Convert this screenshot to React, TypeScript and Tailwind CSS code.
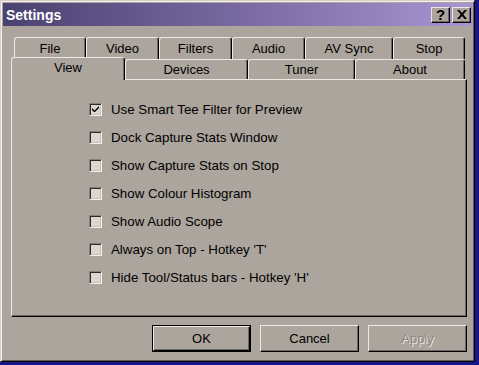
import React from 'react';

const row1: [string, number][] = [
  ['File', 72],
  ['Video', 73],
  ['Filters', 73],
  ['Audio', 73],
  ['AV Sync', 88],
  ['Stop', 72],
];

const row2: [string, number][] = [
  ['Devices', 123],
  ['Tuner', 107],
  ['About', 110],
];

const options = [
  { label: 'Use Smart Tee Filter for Preview', checked: true },
  { label: 'Dock Capture Stats Window', checked: false },
  { label: 'Show Capture Stats on Stop', checked: false },
  { label: 'Show Colour Histogram', checked: false },
  { label: 'Show Audio Scope', checked: false },
  { label: "Always on Top - Hotkey 'T'", checked: false },
  { label: "Hide Tool/Status bars - Hotkey 'H'", checked: false },
];

function Tab({ label, width }: { label: string; width: number }) {
  return (
    <div
      style={{ width }}
      className="h-full flex items-center justify-center bg-[#aca59d] border-t border-l border-r border-t-[#ece7e1] border-l-[#ece7e1] border-r-[#000] rounded-t-[3px] shadow-[inset_-1px_0_#6e6862]"
    >
      {label}
    </div>
  );
}

function Checkbox({ checked }: { checked: boolean }) {
  return (
    <div className="w-[13px] h-[13px] border border-t-[#857e77] border-l-[#857e77] border-r-[#f2eee9] border-b-[#f2eee9] bg-[#dcd6cf] shadow-[inset_1px_1px_#2e2a27,inset_-1px_-1px_#c9c2bb] flex items-center justify-center">
      {checked && (
        <svg width="7" height="7" viewBox="0 0 7 7" className="block">
          <path d="M0 2 L0 4 L2 6 L3 6 L7 2 L7 0 L2.5 4.5 Z" fill="#000" />
        </svg>
      )}
    </div>
  );
}

function Button({ label, isDefault, disabled }: { label: string; isDefault?: boolean; disabled?: boolean }) {
  return (
    <div className={'w-[99px] h-[27px] ' + (isDefault ? 'border border-[#000]' : '')}>
      <div className="w-full h-full flex items-center justify-center border border-t-[#ece7e1] border-l-[#ece7e1] border-r-[#000] border-b-[#000] shadow-[inset_-1px_-1px_#6e6862]">
        <span className={disabled ? 'text-[#8c857e] [text-shadow:1px_1px_#ece7e1]' : 'text-black'}>{label}</span>
      </div>
    </div>
  );
}

export default function App() {
  return (
    <div className="w-[479px] h-[365px] bg-[#16168a] font-['Liberation_Sans',Arial,sans-serif] text-[13px] text-black">
      <div className="w-[475px] h-[362px] bg-[#aca59d] border border-t-[#d6cfc8] border-l-[#d6cfc8] border-r-[#000] border-b-[#000] shadow-[inset_1px_1px_#f4f0ec,inset_-1px_-1px_#5e5852] p-[2px]">
        {/* Title bar */}
        <div className="h-[23px] flex items-center justify-between bg-linear-to-r from-[#4a4271] to-[#a994d2] pl-[3px] pr-[1px]">
          <span className="text-white font-bold text-[14px] leading-none">Settings</span>
          <div className="flex gap-[2px]">
            <div className="w-[19px] h-[16px] bg-[#aca59d] border border-t-[#ece7e1] border-l-[#ece7e1] border-r-[#000] border-b-[#000] shadow-[inset_-1px_-1px_#6e6862] flex items-center justify-center">
              <span className="font-bold text-[15px] leading-none">?</span>
            </div>
            <div className="w-[19px] h-[16px] bg-[#aca59d] border border-t-[#ece7e1] border-l-[#ece7e1] border-r-[#000] border-b-[#000] shadow-[inset_-1px_-1px_#6e6862] flex items-center justify-center">
              <svg width="10" height="9" viewBox="0 0 10 9" className="block">
                <path d="M0 0h2.5L5 3 7.5 0H10L6.3 4.5 10 9H7.5L5 6 2.5 9H0l3.7-4.5z" fill="#000" />
              </svg>
            </div>
          </div>
        </div>

        <div className="ml-[8px] w-[456px] mt-[11px]">
          {/* Back row of tabs */}
          <div className="flex h-[22px] pl-[3px]">
            {row1.map(([l, w]) => (
              <Tab key={l} label={l} width={w} />
            ))}
          </div>
          {/* Front row of tabs */}
          <div className="flex h-[20px] items-end">
            <div className="relative z-10 w-[114px] h-[23px] -mb-px flex items-center justify-center pb-[3px] bg-[#aca59d] border-t border-l border-r border-t-[#ece7e1] border-l-[#ece7e1] border-r-[#000] rounded-t-[3px] shadow-[inset_-1px_0_#6e6862]">
              View
            </div>
            {row2.map(([l, w]) => (
              <Tab key={l} label={l} width={w} />
            ))}
          </div>
          {/* Panel */}
          <div className="h-[238px] border border-t-[#ece7e1] border-l-[#ece7e1] border-r-[#000] border-b-[#000] shadow-[inset_-1px_-1px_#6e6862] pt-[23px] pl-[77px]">
            <div className="flex flex-col gap-[15px]">
              {options.map((o) => (
                <div key={o.label} className="flex items-center h-[13px] gap-[9px]">
                  <Checkbox checked={o.checked} />
                  <span className="leading-none text-[13.3px]">{o.label}</span>
                </div>
              ))}
            </div>
          </div>
          {/* Buttons */}
          <div className="mt-[8px] flex justify-end gap-[9px]">
            <Button label="OK" isDefault />
            <Button label="Cancel" />
            <Button label="Apply" disabled />
          </div>
        </div>
      </div>
    </div>
  );
}
